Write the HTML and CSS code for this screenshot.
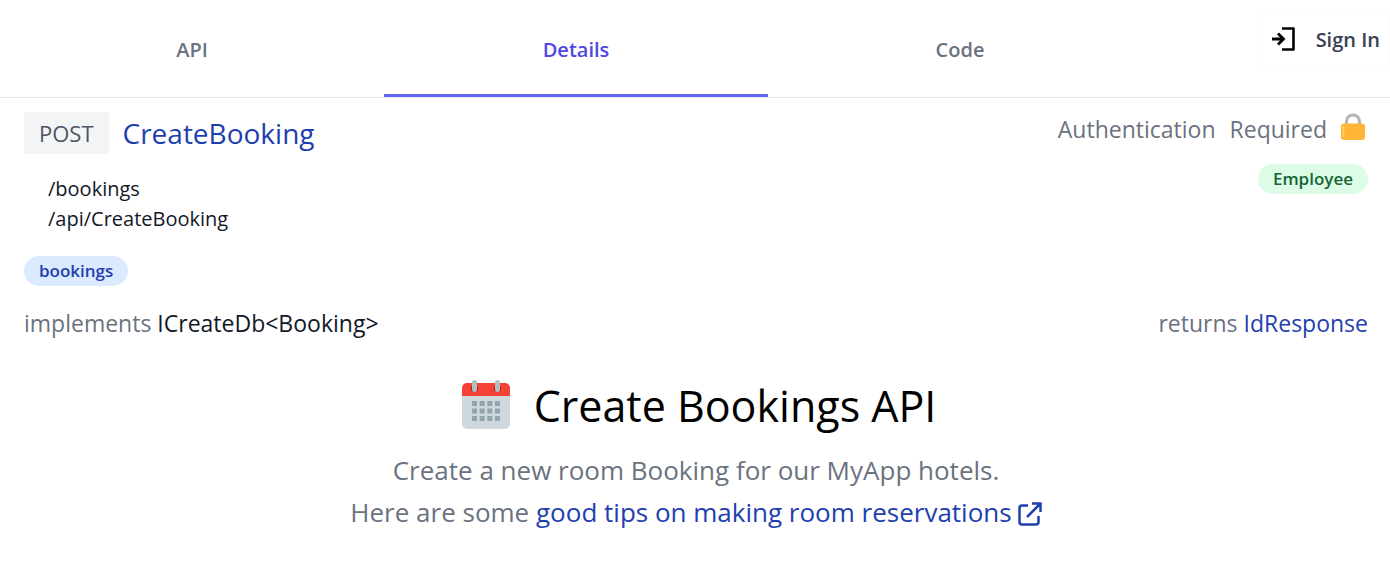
FILE: index.html
```html
<!DOCTYPE html>
<html lang="en">
<head>
<meta charset="utf-8">
<title>CreateBooking</title>
<link rel="stylesheet" href="styles.css">
</head>
<body>
<header class="topbar">
  <nav class="tabs">
    <a class="tab" href="#api">API</a>
    <a class="tab tab-active" href="#details" aria-current="page">Details</a>
    <a class="tab" href="#code">Code</a>
  </nav>
  <div class="account">
    <button class="sign-in" type="button">
      <svg class="sign-in-icon" viewBox="0 0 24 24" aria-hidden="true"><path d="M10 1.500h11.500v21H10" fill="none" stroke="#000" stroke-width="2.600" stroke-linejoin="round"/><path d="M0 12h11M6 6.500l5.500 5.500L6 17.500" fill="none" stroke="#000" stroke-width="2.800"/></svg>
      <span>Sign In</span>
    </button>
  </div>
</header>
<main class="content">
  <section class="summary">
    <div class="endpoint">
      <h2 class="heading"><span class="verb">POST</span><span class="name">CreateBooking</span></h2>
      <div class="routes"><div>/bookings</div><div>/api/CreateBooking</div></div>
    </div>
    <div class="auth">
      <div class="auth-line"><span>Authentication</span><span>Required</span>
        <svg class="lock" viewBox="0 0 24 27" aria-hidden="true"><path d="M5.500 13V8.500a6.500 6.500 0 0 1 13 0V13" fill="none" stroke="#b0b5b8" stroke-width="3"/><rect y="10.500" width="24" height="16.500" rx="3" fill="#ffb636"/><path d="M2.500 13.500v10" stroke="#ffd469" stroke-width="1.500" stroke-linecap="round"/></svg>
      </div>
      <span class="pill pill-green">Employee</span>
    </div>
  </section>
  <div class="tags"><span class="pill pill-blue">bookings</span></div>
  <div class="types">
    <div>implements <span class="type">ICreateDb&lt;Booking&gt;</span></div>
    <div>returns <a class="link" href="#IdResponse">IdResponse</a></div>
  </div>
  <article class="notes">
    <h1 class="title">
      <svg class="calendar" viewBox="0 0 48 50" aria-hidden="true"><path d="M0 15h48v29a5 5 0 0 1-5 5H5a5 5 0 0 1-5-5z" fill="#cfd8dc"/><path d="M0 16V8a5 5 0 0 1 5-5h38a5 5 0 0 1 5 5v8z" fill="#f44336"/><g fill="#b71c1c"><circle cx="12.500" cy="8.500" r="3.600"/><circle cx="35.500" cy="8.500" r="3.600"/></g><path d="M12.500 2.500v7M35.500 2.500v7" stroke="#b0bec5" stroke-width="5" stroke-linecap="round"/><path d="M10 23.500h28M10 31h28M10 38.500h28" stroke="#90a4ae" stroke-width="5" stroke-dasharray="5 2.667"/></svg>
      <span>Create Bookings API</span>
    </h1>
    <p class="lead">Create a new room Booking for our MyApp hotels.</p>
    <p class="lead">Here are some <a class="link" href="#tips">good tips on making room reservations<svg class="external" viewBox="0 0 24 24" aria-hidden="true"><path d="M10 3.500H4A2.500 2.500 0 0 0 1.500 6v14A2.500 2.500 0 0 0 4 22.500h14a2.500 2.500 0 0 0 2.500-2.500v-6M14 1.500h8.500V10M22 2L9 15" fill="none" stroke="currentColor" stroke-width="2.500"/></svg></a></p>
  </article>
</main>
</body>
</html>
```
FILE: styles.css
```css
* { box-sizing: border-box; }
body { margin: 0; background: #fff; color: #111827; font-family: "Segoe UI", "Open Sans", "Noto Sans", sans-serif; }
h1, h2, p { margin: 0; font-weight: 400; }
a { text-decoration: none; }
svg { flex: none; }
.topbar { display: flex; border-bottom: 1px solid #e5e7eb; }
.tabs { flex: 1; display: flex; }
.tab { flex: 1; padding: 35px 0 29px; border-bottom: 3px solid transparent; text-align: center; font-size: 20px; line-height: 30px; font-weight: 600; color: #6b7280; }
.tab-active { color: #4f46e5; border-color: #6366f1; }
.account { width: 238px; display: flex; justify-content: flex-end; align-items: flex-start; padding-top: 12px; }
.sign-in { display: flex; align-items: center; gap: 20px; height: 54px; padding: 2px 9px 0 14px; border: 1px solid #fcfcfc; border-radius: 6px; background: #fff; font: 600 20px/30px "Segoe UI", "Open Sans", "Noto Sans", sans-serif; color: #374151; white-space: nowrap; }
.sign-in-icon { width: 24px; height: 24px; margin-top: -2px; }
.content { padding: 14px 22px 0 24px; }
.summary { display: flex; justify-content: space-between; }
.heading { display: flex; align-items: center; gap: 14px; }
.verb { padding: 3px 15px; background: #f3f4f6; color: #4b5563; font-size: 22px; line-height: 36px; }
.name { color: #1e40af; font-size: 28px; line-height: 42px; }
.routes { padding: 20px 0 0 24px; font-size: 20px; line-height: 30px; }
.auth { display: flex; flex-direction: column; align-items: flex-end; gap: 18px; }
.auth-line { display: flex; align-items: center; gap: 14px; padding-right: 3px; font-size: 23px; line-height: 34px; color: #6b7280; }
.lock { width: 24px; height: 27px; margin-top: -6px; }
.pill { padding: 0 15px; border-radius: 15px; font-size: 17px; line-height: 30px; font-weight: 600; }
.pill-green { background: #dcfce7; color: #166534; }
.pill-blue { background: #dbeafe; color: #1e40af; }
.tags { display: flex; padding-top: 22px; }
.types { display: flex; justify-content: space-between; padding-top: 20px; font-size: 23px; line-height: 34px; color: #6b7280; }
.type { color: #111827; }
.link { color: #1e40af; }
.notes { padding-top: 36px; text-align: center; }
.title { display: flex; justify-content: center; align-items: center; gap: 24px; padding-left: 6px; color: #000; font-size: 43px; line-height: 60px; }
.calendar { width: 48px; height: 50px; margin-top: -2px; }
.lead { color: #6b7280; font-size: 26px; line-height: 42px; }
.title + .lead { padding-top: 13px; }
.external { width: 24px; height: 24px; margin-left: 6px; vertical-align: -4px; }
```
